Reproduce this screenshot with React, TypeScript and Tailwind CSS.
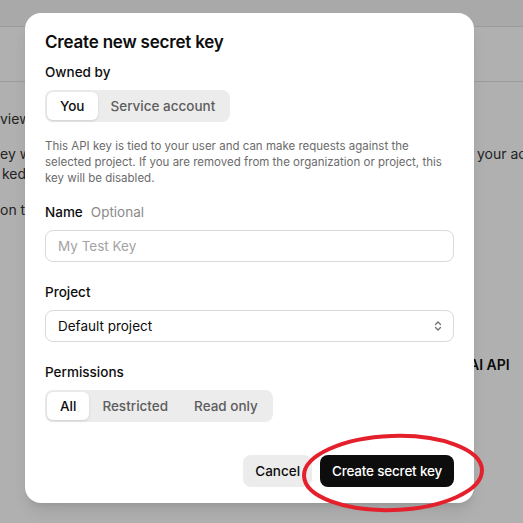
export default function App() {
  return (
    <div className="relative h-[523px] w-[523px] overflow-hidden bg-white font-['Inter',sans-serif] text-[#0d0d0d]">
      {/* page behind the dialog */}
      <div className="flex h-full flex-col text-[14px] text-[#333]">
        <div className="h-[27px] border-b border-[#e3e3e3] bg-[#f5f5f5]" />
        <div className="h-[55px] border-b border-[#e3e3e3]" />
        <p className="mt-[27px] w-[25px] overflow-hidden leading-5 whitespace-nowrap">view</p>
        <div className="mt-[15px] flex justify-between leading-5 whitespace-nowrap">
          <span className="w-[25px] overflow-hidden">ey w</span>
          <span className="w-[46px] overflow-hidden">your ac</span>
        </div>
        <p className="w-[25px] overflow-hidden pl-[2px] leading-5 whitespace-nowrap">ked</p>
        <p className="mt-4 w-[25px] overflow-hidden leading-5 whitespace-nowrap">on t</p>
        <div className="mt-[135px] flex justify-end pr-[11px] leading-5 font-semibold text-[#111]">
          <span className="w-[43px] overflow-hidden whitespace-nowrap">AI API</span>
        </div>
      </div>

      <div className="absolute inset-0 bg-black/[0.31]" />

      {/* dialog */}
      <div className="absolute top-[13px] left-[25px] w-[449px] rounded-2xl bg-white px-5 pt-[17px] pb-4 shadow-lg">
        <h2 className="text-[17px] leading-6 font-semibold tracking-[-0.2px]">Create new secret key</h2>

        <p className="mt-2 text-[13.5px] leading-5 font-medium">Owned by</p>
        <div className="mt-2 inline-flex h-8 rounded-lg bg-[#ececec] p-0.5 text-[13.5px] font-medium">
          <button className="rounded-md bg-white px-[13px] text-[#0d0d0d] shadow-sm">You</button>
          <button className="px-[13px] text-[#5d5d5d]">Service account</button>
        </div>

        <p className="mt-4 text-[11.5px] leading-4 text-[#6b6b6b]">
          This API key is tied to your user and can make requests against the selected project. If you are removed from the organization or project, this key will be disabled.
        </p>

        <p className="mt-4 text-[13.5px] leading-5">
          <span className="font-medium">Name</span>
          <span className="ml-2 text-[#8a8a8a]">Optional</span>
        </p>
        <input
          placeholder="My Test Key"
          className="mt-2 h-8 w-full rounded-lg border border-[#d9d9d9] px-3 text-[13.5px] outline-none placeholder:text-[#a3a3a3]"
        />

        <p className="mt-5 text-[13.5px] leading-5 font-medium">Project</p>
        <div className="mt-2 flex h-8 items-center justify-between rounded-lg border border-[#d9d9d9] pr-[9px] pl-3 text-[13.5px]">
          <span>Default project</span>
          <svg width="12" height="14" viewBox="0 0 12 14" fill="none" stroke="#707070" strokeWidth="1.3" strokeLinecap="round" strokeLinejoin="round">
            <path d="M3.5 5.5L6 3l2.5 2.5" />
            <path d="M3.5 8.5L6 11l2.5-2.5" />
          </svg>
        </div>

        <p className="mt-5 text-[13.5px] leading-5 font-medium">Permissions</p>
        <div className="mt-2 inline-flex h-8 rounded-lg bg-[#ececec] p-0.5 text-[13.5px] font-medium">
          <button className="rounded-md bg-white px-[13px] text-[#0d0d0d] shadow-sm">All</button>
          <button className="px-[13px] text-[#5d5d5d]">Restricted</button>
          <button className="px-[13px] text-[#5d5d5d]">Read only</button>
        </div>

        <div className="mt-[33px] flex justify-end gap-2 text-[13.5px] font-medium">
          <button className="h-8 rounded-lg bg-[#ececec] px-3 text-[#0d0d0d]">Cancel</button>
          <button className="h-8 rounded-lg bg-[#0d0d0d] px-3 tracking-[-0.2px] text-white">Create secret key</button>
        </div>
      </div>

      {/* red annotation */}
      <svg className="absolute top-[432px] left-[300px]" width="186" height="82" viewBox="0 0 186 82" fill="none">
        <ellipse cx="93" cy="41" rx="89" ry="37" stroke="#e3202b" strokeWidth="4" transform="rotate(-2 93 41)" />
      </svg>
    </div>
  );
}
